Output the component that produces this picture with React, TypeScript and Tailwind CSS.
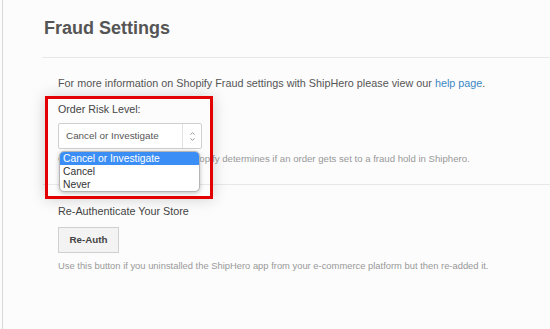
import { ChevronDown, ChevronUp } from 'lucide-react'

const options = ['Cancel or Investigate', 'Cancel', 'Never']

/** Closed select box with the native-looking up/down arrows */
function RiskSelect() {
  return (
    <div className="flex h-[26px] w-[144px] items-stretch rounded-[2px] border border-[#cfcfcf] bg-white text-[9.9px] text-[#555]">
      <div className="flex flex-1 items-center pl-[7px]">Cancel or Investigate</div>
      <div className="flex w-[19px] flex-col items-center justify-center border-l border-[#e2e2e2] text-[#888]">
        <ChevronUp size={7} strokeWidth={3} className="-mb-[1px]" />
        <ChevronDown size={7} strokeWidth={3} />
      </div>
    </div>
  )
}

/** Open option list drawn over the help text */
function RiskOptions() {
  return (
    <div className="absolute left-[1px] top-[50px] w-[141px] overflow-hidden rounded-[5px] border border-[#b5b5b5] bg-white text-[10.3px] leading-[13px] text-[#333] shadow-[0_1px_4px_rgba(0,0,0,0.25)]">
      {options.map((option, i) => (
        <div key={option} className={i === 0 ? 'bg-[#3a8ef6] px-[3px] text-white' : 'px-[3px]'}>
          {option}
        </div>
      ))}
    </div>
  )
}

export default function App() {
  return (
    <div className="h-[329px] w-[550px] overflow-hidden bg-[#fcfcfc] pl-[2px] font-['Liberation_Sans',Arial,sans-serif]">
      <div className="h-full border-l border-[#d8d8d8] pl-[39px] pt-[17px]">
        <h1 className="pl-[2px] text-[18px] font-bold leading-[22px] text-[#555]">Fraud Settings</h1>
        <div className="mt-[18px] h-px bg-[#e8e8e8]" />

        <div className="pl-[16px]">
          <p className="mt-[17px] text-[10.8px] leading-[16px] text-[#555]">
            For more information on Shopify Fraud settings with ShipHero please view our{' '}
            <span className="text-[#3b87c4]">help page</span>.
          </p>

          <div className="relative mt-[10px]">
            <div className="text-[10.7px] leading-[16px] text-[#444]">Order Risk Level:</div>
            <div className="mt-[6px]">
              <RiskSelect />
            </div>
            <p className="mt-[2px] text-[9.6px] leading-[15px] text-[#999]">
              Choose the risk level at which Shopify determines if an order gets set to a fraud hold in Shiphero.
            </p>
            <div className="pointer-events-none absolute left-[-13px] top-[-5px] h-[103px] w-[168px] border-[3px] border-[#e30000] shadow-[0_0_14px_rgba(0,0,0,0.18)]" />
            <RiskOptions />
          </div>
        </div>

        <div className="ml-[1px] mt-[18px] h-px bg-[#e8e8e8]" />

        <div className="pl-[16px]">
          <div className="mt-[18px] text-[10.8px] leading-[16px] text-[#444]">Re-Authenticate Your Store</div>
          <button className="mt-[8px] flex h-[26px] w-[61px] items-center justify-center border border-[#d0d0d0] bg-[#f3f3f3] text-[9.8px] font-bold text-[#444]">
            Re-Auth
          </button>
          <p className="mt-[5px] text-[9.4px] leading-[15px] text-[#999]">
            Use this button if you uninstalled the ShipHero app from your e-commerce platform but then re-added it.
          </p>
        </div>
      </div>
    </div>
  )
}
